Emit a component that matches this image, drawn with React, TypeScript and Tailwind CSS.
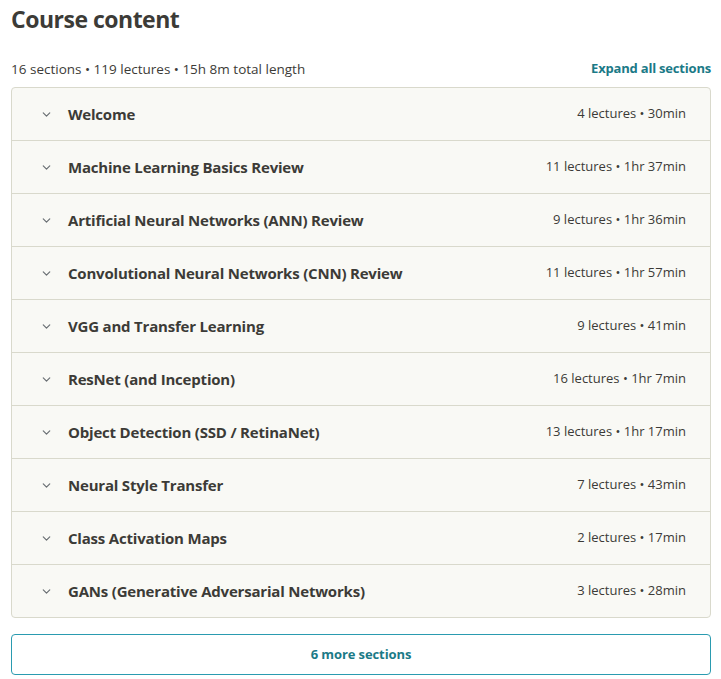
import { ChevronDown } from "lucide-react"

const sections = [
  { title: "Welcome", meta: "4 lectures • 30min" },
  { title: "Machine Learning Basics Review", meta: "11 lectures • 1hr 37min" },
  { title: "Artificial Neural Networks (ANN) Review", meta: "9 lectures • 1hr 36min" },
  { title: "Convolutional Neural Networks (CNN) Review", meta: "11 lectures • 1hr 57min" },
  { title: "VGG and Transfer Learning", meta: "9 lectures • 41min" },
  { title: "ResNet (and Inception)", meta: "16 lectures • 1hr 7min" },
  { title: "Object Detection (SSD / RetinaNet)", meta: "13 lectures • 1hr 17min" },
  { title: "Neural Style Transfer", meta: "7 lectures • 43min" },
  { title: "Class Activation Maps", meta: "2 lectures • 17min" },
  { title: "GANs (Generative Adversarial Networks)", meta: "3 lectures • 28min" },
]

export default function App() {
  return (
    <div className="w-[721px] h-[679px] bg-white text-[#3c3b37] font-['Open_Sans',sans-serif]">
      <h2 className="pl-[11px] pt-[3px] text-[23px] leading-[32px] font-bold tracking-[-0.5px]">Course content</h2>

      <div className="mt-[24px] flex items-center justify-between pl-[11px] pr-[10px] h-[20px]">
        <span className="text-[13.5px]">16 sections • 119 lectures • 15h 8m total length</span>
        <button className="text-[13px] font-bold text-[#1b7a87] tracking-[-0.2px]">Expand all sections</button>
      </div>

      <div className="mx-[11px] mt-[8px] w-[700px] border border-[#d9d9cc] rounded-[4px] bg-[#f9f9f5] overflow-hidden">
        {sections.map((s, i) => (
          <div
            key={s.title}
            className={`flex items-center pl-[28px] pr-[24px] ${i > 0 ? "h-[53px] border-t border-[#d9d9cc]" : "h-[52px]"}`}
          >
            <ChevronDown className="w-[13px] h-[13px] text-[#6a6f73]" strokeWidth={2.2} />
            <span className="ml-[15px] flex-1 text-[15px] font-bold tracking-[-0.2px]">{s.title}</span>
            <span className="text-[13px]">{s.meta}</span>
          </div>
        ))}
      </div>

      <button className="mx-[11px] mt-[16px] w-[700px] h-[41px] border border-[#2a9bb0] rounded-[4px] text-[13px] font-bold text-[#1b7a87] tracking-[-0.1px]">
        6 more sections
      </button>
    </div>
  )
}
